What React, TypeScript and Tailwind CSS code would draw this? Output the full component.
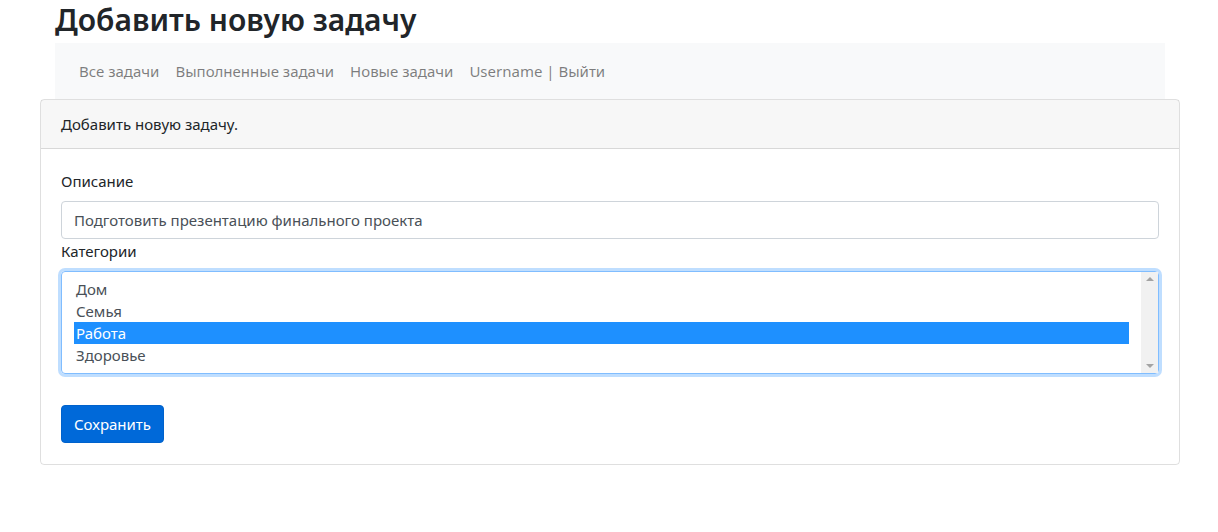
import React from 'react';

const categories = ['Дом', 'Семья', 'Работа', 'Здоровье'];
const navLinks = ['Все задачи', 'Выполненные задачи', 'Новые задачи', 'Username | Выйти'];

export default function App(): React.JSX.Element {
    const [selected, setSelected] = React.useState('Работа');

    return (
        <div className="min-h-[532px] bg-white text-[15px] leading-[24px] text-[#212529] font-['Noto_Sans',sans-serif]">
            <div className="ml-[40px] w-[1140px] px-[15px]">
                <h1 className="h-[43px] pt-[2px] text-[30px] leading-[36px] font-semibold">Добавить новую задачу</h1>
                <nav className="flex h-[56px] items-center bg-[#f8f9fa] px-[16px]">
                    {navLinks.map((link) => (
                        <a key={link} className="px-[8px] text-[rgba(0,0,0,0.5)]" href="#">
                            {link}
                        </a>
                    ))}
                </nav>
            </div>
            <div className="ml-[40px] w-[1140px] rounded-[4px] border border-[rgba(0,0,0,0.125)]">
                <div className="border-b border-[rgba(0,0,0,0.125)] bg-[rgba(0,0,0,0.03)] px-[20px] py-[12px]">
                    Добавить новую задачу.
                </div>
                <div className="px-[20px] pt-[20px] pb-[21px]">
                    <label className="mb-[8px] block">Описание</label>
                    <input
                        className="block h-[38px] w-full rounded-[4px] border border-[#ced4da] px-[12px] text-[#495057] outline-none"
                        defaultValue="Подготовить презентацию финального проекта"
                    />
                    <label className="mb-[8px] block">Категории</label>
                    <div className="flex h-[103px] rounded-[4px] border border-[#80bdff] shadow-[0_0_0_3px_rgba(0,123,255,0.25)]">
                        <div className="flex-1 px-[12px] pt-[6px] text-[#495057]">
                            {categories.map((cat) => (
                                <div
                                    key={cat}
                                    onClick={() => setSelected(cat)}
                                    className={
                                        cat === selected
                                            ? 'h-[22px] bg-[#1e90ff] px-[2px] leading-[22px] text-white'
                                            : 'h-[22px] px-[2px] leading-[22px]'
                                    }
                                >
                                    {cat}
                                </div>
                            ))}
                        </div>
                        <div className="flex w-[17px] flex-col items-center justify-between bg-[#f1f1f1] py-[5px]">
                            <div className="h-0 w-0 border-x-[4px] border-b-[4px] border-x-transparent border-b-[#a3a3a3]" />
                            <div className="h-0 w-0 border-x-[4px] border-t-[4px] border-x-transparent border-t-[#a3a3a3]" />
                        </div>
                    </div>
                    <button className="mt-[31px] h-[38px] rounded-[4px] border border-[#0062cc] bg-[#0069d9] px-[12px] text-white">
                        Сохранить
                    </button>
                </div>
            </div>
        </div>
    );
}
